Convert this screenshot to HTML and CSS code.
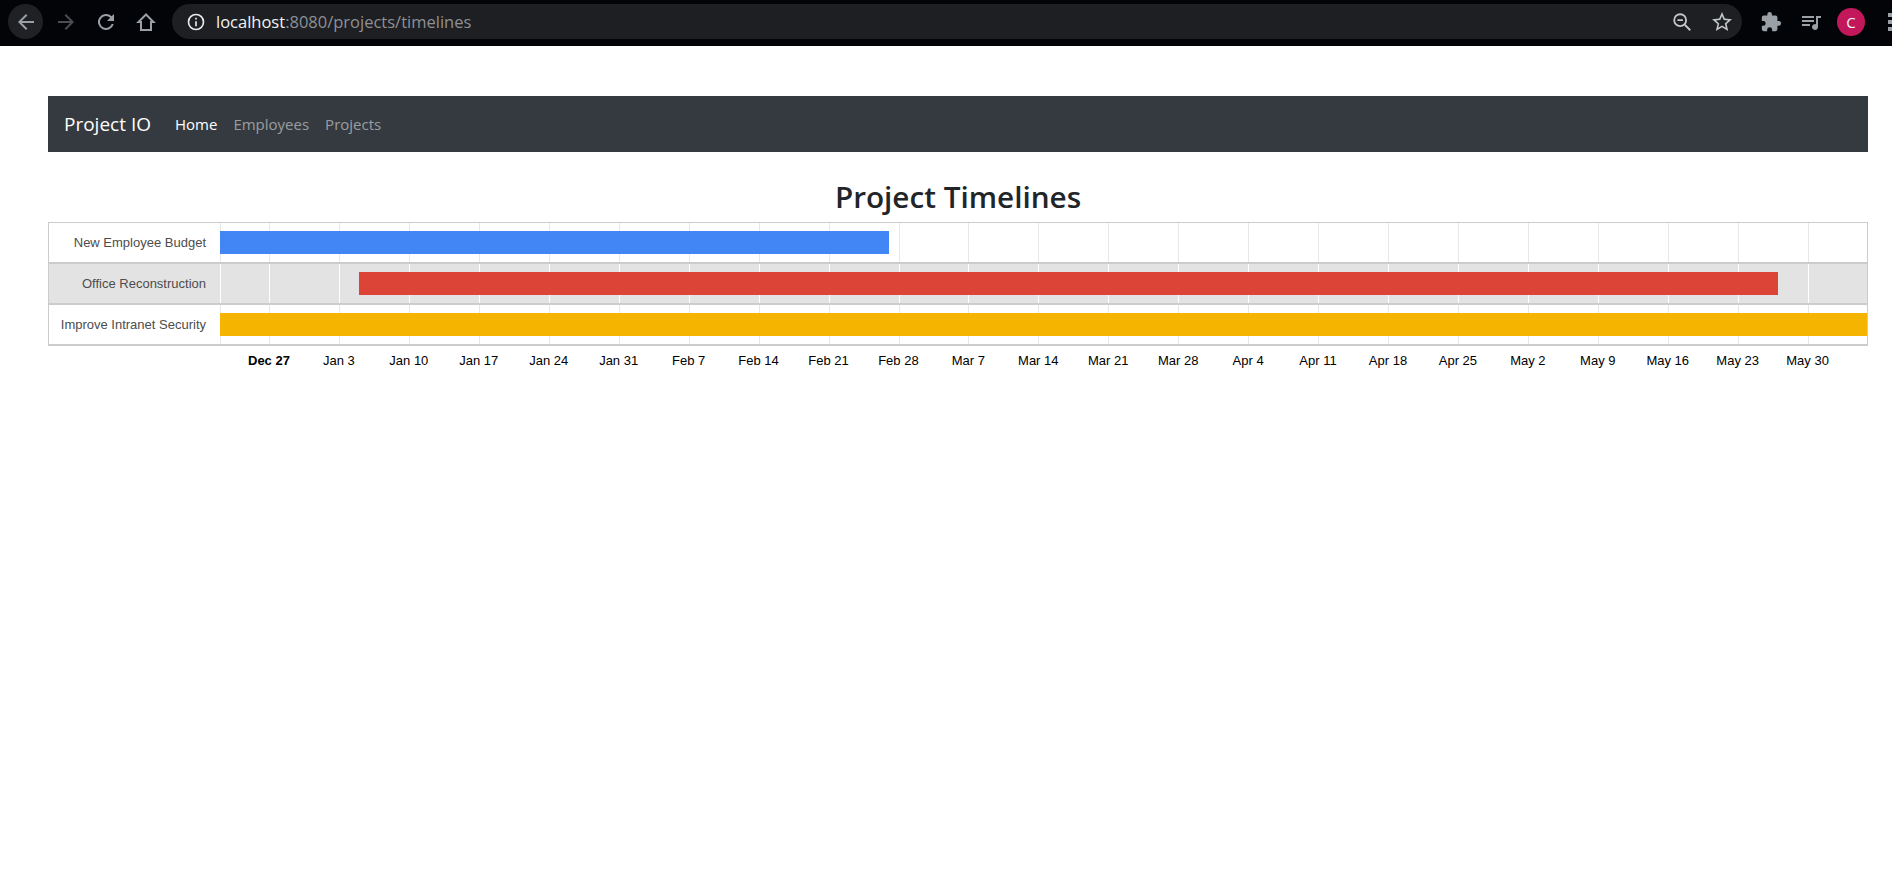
FILE: index.html
```html
<!DOCTYPE html>
<html lang="en">
<head>
    <meta charset="UTF-8">
    <meta name="viewport" content="width=device-width, initial-scale=1.0">
    <title>Project Timelines</title>
    <link rel="stylesheet" href="styles.css">
</head>
<body>
    <div class="browser-bar">
        <div class="browser-nav">
            <span class="nav-btn nav-btn-active">
                <svg width="24" height="24" viewBox="0 0 24 24"><path d="M20 11H7.800l5.600-5.600L12 4l-8 8 8 8 1.400-1.400L7.800 13H20z" fill="#9aa0a6"/></svg>
            </span>
            <span class="nav-btn">
                <svg width="24" height="24" viewBox="0 0 24 24"><path d="M4 11h12.200l-5.600-5.600L12 4l8 8-8 8-1.400-1.400 5.600-5.600H4z" fill="#4a4d51"/></svg>
            </span>
            <span class="nav-btn">
                <svg width="24" height="24" viewBox="0 0 24 24"><path d="M17.650 6.350A8 8 0 1 0 19.730 14h-2.080a6 6 0 1 1-1.410-6.240L13 11h7V4z" fill="#9aa0a6"/></svg>
            </span>
            <span class="nav-btn">
                <svg width="24" height="24" viewBox="0 0 24 24"><path d="M12 4.500L4.500 12H7v8h10v-8h2.500z" fill="none" stroke="#9aa0a6" stroke-width="2"/></svg>
            </span>
        </div>
        <div class="omnibox">
            <svg class="info-icon" width="20" height="20" viewBox="0 0 24 24"><path d="M12 2a10 10 0 1 0 0 20 10 10 0 0 0 0-20zm0 18a8 8 0 1 1 0-16 8 8 0 0 1 0 16zm-1-5h2v2h-2zm0-8h2v6h-2z" transform="rotate(180 12 12)" fill="#e8eaed"/></svg>
            <span class="url"><span class="url-host">localhost</span>:8080/projects/timelines</span>
            <span class="omnibox-icons">
                <svg width="22" height="22" viewBox="0 0 24 24" fill="none" stroke="#c4c7ca" stroke-width="2"><circle cx="10" cy="10" r="6.500"/><path d="M15 15l6 6M7 10h6"/></svg>
                <svg width="24" height="24" viewBox="0 0 24 24"><path d="M22 9.200l-7.200-.6L12 2 9.200 8.600 2 9.200l5.500 4.800L5.800 21l6.200-3.700 6.200 3.700-1.600-7zM12 15.400l-3.800 2.300 1-4.300-3.300-2.900 4.400-.4L12 6.100l1.700 4 4.400.4-3.300 2.900 1 4.300z" fill="#c4c7ca"/></svg>
            </span>
        </div>
        <div class="browser-tools">
            <svg width="22" height="22" viewBox="0 0 24 24"><path d="M20.500 11H19V7a2 2 0 0 0-2-2h-4V3.500a2.500 2.500 0 0 0-5 0V5H4a2 2 0 0 0-2 2v3.800h1.500a2.700 2.700 0 0 1 0 5.400H2V20a2 2 0 0 0 2 2h3.800v-1.500a2.700 2.700 0 0 1 5.400 0V22H17a2 2 0 0 0 2-2v-4h1.500a2.500 2.500 0 0 0 0-5z" fill="#9aa0a6"/></svg>
            <svg width="24" height="24" viewBox="0 0 24 24"><path d="M3 6h12v2H3zm0 4h12v2H3zm0 4h8v2H3zm14-8h5v2h-3v9a3 3 0 1 1-2-2.800z" fill="#9aa0a6"/></svg>
            <span class="avatar">C</span>
            <span class="dots"><i></i><i></i><i></i></span>
        </div>
    </div>

    <div class="container">
        <nav class="navbar">
            <a class="brand" href="#">Project IO</a>
            <a class="nav-link active" href="#">Home</a>
            <a class="nav-link" href="#">Employees</a>
            <a class="nav-link" href="#">Projects</a>
        </nav>

        <h1>Project Timelines</h1>

        <div class="timeline">
            <div class="row">
                <div class="row-label">New Employee Budget</div>
                <div class="row-plot"><div class="bar bar-blue" style="margin-left: 0; width: 669px"></div></div>
            </div>
            <div class="row row-alt">
                <div class="row-label">Office Reconstruction</div>
                <div class="row-plot"><div class="bar bar-red" style="margin-left: 139px; width: 1419px"></div></div>
            </div>
            <div class="row">
                <div class="row-label">Improve Intranet Security</div>
                <div class="row-plot"><div class="bar bar-yellow" style="margin-left: 0; width: 100%"></div></div>
            </div>
        </div>

        <div class="axis">
            <span class="tick tick-bold">Dec 27</span>
            <span class="tick">Jan 3</span>
            <span class="tick">Jan 10</span>
            <span class="tick">Jan 17</span>
            <span class="tick">Jan 24</span>
            <span class="tick">Jan 31</span>
            <span class="tick">Feb 7</span>
            <span class="tick">Feb 14</span>
            <span class="tick">Feb 21</span>
            <span class="tick">Feb 28</span>
            <span class="tick">Mar 7</span>
            <span class="tick">Mar 14</span>
            <span class="tick">Mar 21</span>
            <span class="tick">Mar 28</span>
            <span class="tick">Apr 4</span>
            <span class="tick">Apr 11</span>
            <span class="tick">Apr 18</span>
            <span class="tick">Apr 25</span>
            <span class="tick">May 2</span>
            <span class="tick">May 9</span>
            <span class="tick">May 16</span>
            <span class="tick">May 23</span>
            <span class="tick">May 30</span>
        </div>
    </div>
</body>
</html>
```

FILE: styles.css
```css
body {
    margin: 0;
    background-color: #fff;
    font-family: "Open Sans", sans-serif;
    color: #212529;
    overflow: hidden;
}

.browser-bar {
    height: 46px;
    background-color: #030408;
    display: flex;
    align-items: center;
    box-sizing: border-box;
    padding: 0 0 3px 8px;
    overflow: hidden;
}
.browser-nav {
    display: flex;
    gap: 5px;
    align-items: center;
}
.nav-btn {
    width: 35px;
    height: 35px;
    border-radius: 50%;
    display: flex;
    align-items: center;
    justify-content: center;
}
.nav-btn-active {
    background-color: #1f2124;
}
.omnibox {
    margin-left: 9px;
    width: 1570px;
    height: 35px;
    border-radius: 18px;
    background-color: #1d1f23;
    display: flex;
    align-items: center;
    box-sizing: border-box;
    padding: 0 8px 0 14px;
}
.url {
    margin-left: 10px;
    font-size: 16.5px;
    color: #8e9196;
    white-space: nowrap;
}
.url-host {
    color: #f1f3f4;
}
.omnibox-icons {
    margin-left: auto;
    display: flex;
    gap: 17px;
    align-items: center;
}
.browser-tools {
    margin-left: 18px;
    display: flex;
    align-items: center;
    gap: 17px;
    flex-shrink: 0;
}
.avatar {
    width: 28px;
    height: 28px;
    margin-left: -3px;
    border-radius: 50%;
    background-color: #c2185b;
    color: #f5f5f5;
    font-size: 15px;
    display: flex;
    align-items: center;
    justify-content: center;
}
.dots {
    margin-left: 6px;
    display: flex;
    flex-direction: column;
    gap: 3px;
}
.dots i {
    width: 4px;
    height: 4px;
    background-color: #9aa0a6;
}

.container {
    padding: 50px 24px 0 48px;
}
.navbar {
    height: 56px;
    background-color: #343a40;
    display: flex;
    align-items: center;
    padding: 0 16px;
}
.brand {
    font-size: 19px;
    color: #fff;
    text-decoration: none;
    margin-right: 16px;
}
.nav-link {
    font-size: 15px;
    color: rgba(255, 255, 255, 0.5);
    text-decoration: none;
    padding: 0 8px;
}
.nav-link.active {
    color: #fff;
}

h1 {
    margin: 0;
    height: 70px;
    line-height: 90px;
    font-size: 29.7px;
    font-weight: 600;
    text-align: center;
    color: #212529;
}

.timeline {
    border: 1px solid #ccc;
    border-bottom: none;
}
.row {
    display: flex;
    height: 39px;
    border-bottom: 2px solid #ccc;
    background-color: #fff;
}
.row-alt {
    background-color: #e3e3e3;
}
.row-label {
    flex: 0 0 171px;
    box-sizing: border-box;
    padding-right: 14px;
    text-align: right;
    white-space: nowrap;
    font-family: "Liberation Sans", Arial, sans-serif;
    font-size: 13px;
    line-height: 39px;
    color: #4d4d4d;
}
.row-plot {
    flex: 1;
    min-width: 0;
    padding-top: 8px;
    box-sizing: border-box;
    background-image:
        linear-gradient(#e6e6e6, #e6e6e6),
        repeating-linear-gradient(90deg, #e6e6e6 0, #e6e6e6 1px, transparent 1px, transparent 69.95px);
    background-size: 1px 100%, 100% 100%;
    background-position: 0 0, 49px 0;
    background-repeat: no-repeat;
}
.row-alt .row-plot {
    background-image:
        linear-gradient(#fff, #fff),
        repeating-linear-gradient(90deg, #fff 0, #fff 1px, transparent 1px, transparent 69.95px);
}
.bar {
    height: 23px;
}
.bar-blue {
    background-color: #4285f4;
}
.bar-red {
    background-color: #db4437;
}
.bar-yellow {
    background-color: #f4b400;
}

.axis {
    display: flex;
    padding-left: 186px;
    margin-top: 7px;
}
.tick {
    flex: 0 0 69.95px;
    text-align: center;
    font-family: "Liberation Sans", Arial, sans-serif;
    font-size: 13px;
    line-height: 16px;
    color: #000;
}
.tick-bold {
    font-weight: bold;
}
```
